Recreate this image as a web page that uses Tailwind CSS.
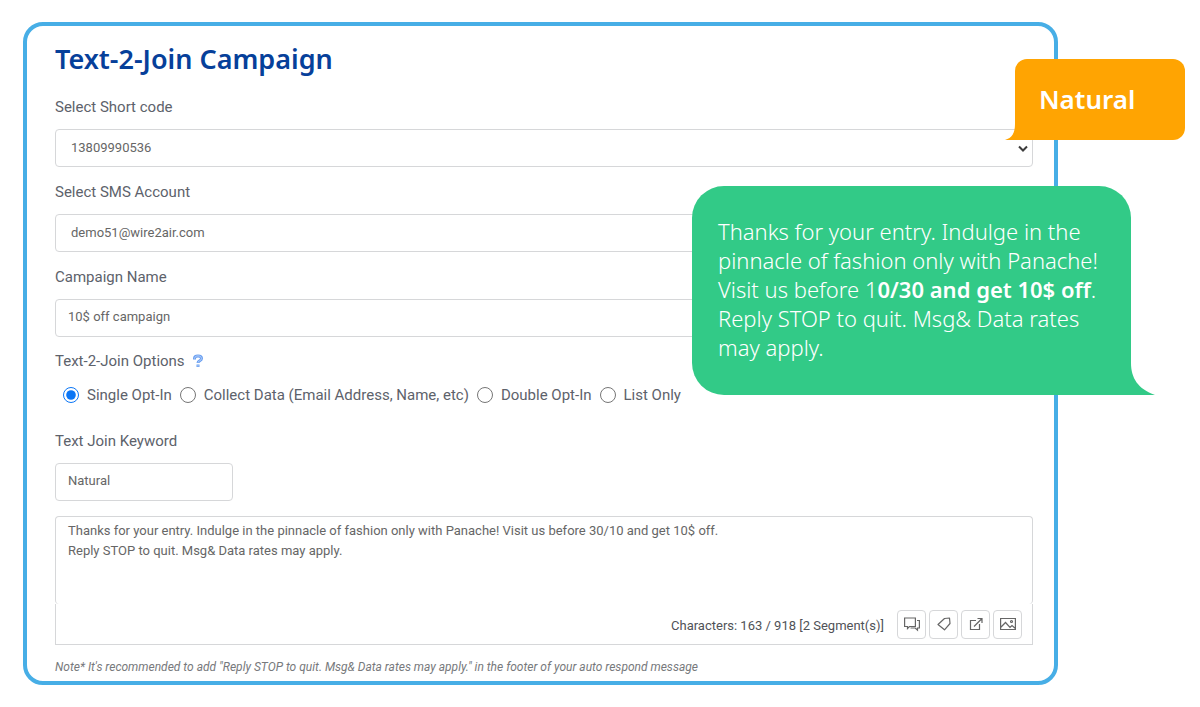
<!DOCTYPE html>
<html lang="en">
<head>
    <meta charset="UTF-8">
    <meta name="viewport" content="width=device-width, initial-scale=1.0">
    <title>Text-2-Join Campaign</title>
    <script src="https://cdn.jsdelivr.net/npm/@tailwindcss/browser@4"></script>
</head>
<body class="bg-white min-h-screen pt-[22px] pb-5 pl-[23px] pr-[142px] font-['Roboto',sans-serif] text-[15px] text-[#5d626b]">
    <main class="relative border-4 border-[#47aee6] rounded-[20px] pt-[17px] pb-1 pl-7 pr-[21px]">
        <h1 class="font-['Noto_Sans',sans-serif] font-semibold text-[27px] leading-8 text-[#06409a]">Text-2-Join Campaign</h1>

        <form class="mt-5">
            <div class="mb-[13px]">
                <label for="shortCode" class="block leading-6 mb-2.5">Select Short code</label>
                <div class="relative">
                    <select id="shortCode" class="block w-full h-[38px] appearance-none rounded border border-[#d6d7d9] bg-white px-[15px] text-[13px] text-[#666]">
                        <option>13809990536</option>
                    </select>
                    <svg class="absolute right-1 top-4 w-3 h-2 pointer-events-none" viewBox="0 0 12 8" fill="none" stroke="#3c3c3c" stroke-width="2"><path d="M2 1.5 6 5.500 10 1.500"/></svg>
                </div>
            </div>

            <div class="mb-[13px]">
                <label for="smsAccount" class="block leading-6 mb-2.5">Select SMS Account</label>
                <select id="smsAccount" class="block w-full h-[38px] appearance-none rounded border border-[#d6d7d9] bg-white px-[15px] text-[13px] text-[#666]">
                    <option>demo51@wire2air.com</option>
                </select>
            </div>

            <div class="mb-3">
                <label for="campaignName" class="block leading-6 mb-2.5">Campaign Name</label>
                <input type="text" id="campaignName" value="10$ off campaign" class="block w-full h-[38px] rounded border border-[#d6d7d9] bg-white px-3 pb-1 text-[13px] text-[#666]">
            </div>

            <fieldset class="mb-[22px]">
                <legend class="flex items-center gap-2 leading-6 mb-2.5">
                    Text-2-Join Options
                    <svg class="w-2.5 h-3.5" viewBox="0 0 10 14" fill="none"><path d="M1.500 5.500V4.500C1.500 1 8.500 1 8.500 4.500 8.500 7 5 6.500 5 9M5 10.500v2.500" stroke="#6a9ff0" stroke-width="3"/><path d="M1.500 4.600C1.500 1 8.500 1 8.500 4.500 8.500 7 5 6.500 5 8.600M5 11v1.500" stroke="#b5d0fb"/></svg>
                </legend>
                <div class="flex items-center gap-2 pl-2 leading-6">
                    <label class="flex items-center gap-2"><input type="radio" name="optIn" checked class="w-4 h-4 accent-[#0a75f5]">Single Opt-In</label>
                    <label class="flex items-center gap-2"><input type="radio" name="optIn" class="w-4 h-4">Collect Data (Email Address, Name, etc)</label>
                    <label class="flex items-center gap-2"><input type="radio" name="optIn" class="w-4 h-4">Double Opt-In</label>
                    <label class="flex items-center gap-2"><input type="radio" name="optIn" class="w-4 h-4">List Only</label>
                </div>
            </fieldset>

            <div class="mb-[15px]">
                <label for="keyword" class="block leading-6 mb-2.5">Text Join Keyword</label>
                <input type="text" id="keyword" value="Natural" class="block w-[178px] h-[38px] rounded border border-[#d6d7d9] bg-white px-3 pb-1 text-[13px] text-[#666]">
            </div>

            <div>
                <textarea aria-label="Message" class="block w-full h-[88px] resize-none rounded border border-b-0 border-[#d6d7d9] bg-white px-3 py-1 text-[13px] leading-5 text-[#666]">Thanks for your entry. Indulge in the pinnacle of fashion only with Panache! Visit us before 30/10 and get 10$ off.
Reply STOP to quit. Msg&amp; Data rates may apply.</textarea>
                <div class="flex items-center justify-end gap-[3px] h-[41px] border border-t-0 border-[#d6d7d9] pr-2.5">
                    <span class="text-[13px] pt-1 mr-2.5 text-[#505257]">Characters: 163 / 918 [2 Segment(s)]</span>
                    <button type="button" aria-label="Templates" class="flex items-center justify-center w-[29px] h-[29px] rounded-sm border border-[#d6d7d9]">
                        <svg class="w-4 h-4" viewBox="0 0 16 16" fill="none" stroke="#666" stroke-width="1.200"><path d="M.6 2h10.800v8.500H5.500L3.500 12.500v-2H.6zM13 4.500h2.400V12h-1.900v2.200L11.200 12H6.500"/></svg>
                    </button>
                    <button type="button" aria-label="Tags" class="flex items-center justify-center w-[29px] h-[29px] rounded-sm border border-[#d6d7d9]">
                        <svg class="w-4 h-4" viewBox="0 0 16 16" fill="none" stroke="#666" stroke-width="1.200"><path d="M8.500 2.500 13.500 2l.5 5.500-5.500 6.300L2 8.500z" stroke-linejoin="round"/></svg>
                    </button>
                    <button type="button" aria-label="Insert link" class="flex items-center justify-center w-[29px] h-[29px] rounded-sm border border-[#d6d7d9]">
                        <svg class="w-4 h-4" viewBox="0 0 16 16" fill="none" stroke="#666" stroke-width="1.200"><path d="M8 4.500H2.500v9h9V8M9.500 2.500H14V7M14 2.500 6 10.500"/></svg>
                    </button>
                    <button type="button" aria-label="Insert image" class="flex items-center justify-center w-[29px] h-[29px] rounded-sm border border-[#d6d7d9]">
                        <svg class="w-4 h-4" viewBox="0 0 16 16" fill="none" stroke="#666" stroke-width="1.200"><path d="M.6 2.500h14.800v11H.6zM.6 11.500 5.500 6.500l4.500 5 2-2 3.400 3"/><circle cx="11.500" cy="5.500" r="1"/></svg>
                    </button>
                </div>
            </div>

            <p class="mt-3 text-xs leading-5 italic text-[#77797c]">Note* It's recommended to add "Reply STOP to quit. Msg&amp; Data rates may apply." in the footer of your auto respond message</p>
        </form>

        <!-- keyword bubble -->
        <div class="absolute top-[33px] -right-[131px] w-[170px] h-[81px] rounded-xl rounded-bl-none bg-[#ffa402] pl-6 flex items-center font-['Noto_Sans',sans-serif] font-semibold text-[26px] text-white">
            <svg class="absolute right-full bottom-0 w-2.5 h-4" viewBox="0 0 10 16"><path d="M11 0h-1c0 9-3 14-10 16h11z" fill="#ffa402"/></svg>
            Natural
        </div>

        <!-- auto reply bubble -->
        <div class="absolute top-40 -right-[77px] w-[439px] h-[209px] rounded-[32px] rounded-br-none bg-[#32ca87] pl-[26px] pt-[31px] font-['Noto_Sans',sans-serif] font-light text-[22px] leading-[29px] text-white">
            <p>Thanks for your entry. Indulge in the<br>pinnacle of fashion only with Panache!<br>Visit us before 1<b class="font-semibold">0/30 and get 10$ off</b>.<br>Reply STOP to quit. Msg&amp; Data rates<br>may apply.</p>
            <svg class="absolute left-full bottom-0 w-6 h-8" viewBox="0 0 24 32"><path d="M-1 0h1c0 15 7 26 24 32H-1z" fill="#32ca87"/></svg>
        </div>
    </main>
</body>
</html>
